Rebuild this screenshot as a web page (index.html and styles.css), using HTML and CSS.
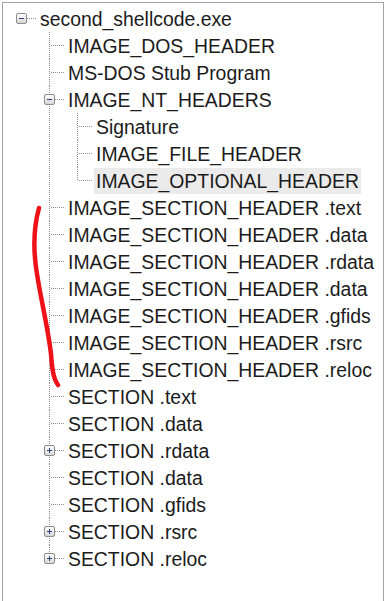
FILE: index.html
```html
<!DOCTYPE html>
<html lang="en">
<head>
  <meta charset="UTF-8">
  <meta name="viewport" content="width=device-width, initial-scale=1.0">
  <title>second_shellcode.exe</title>
  <link rel="stylesheet" href="styles.css">
</head>
<body>
  <div class="tree">
    <ul>
      <li class="root">
        <div class="row"><span class="box open"></span><span class="label">second_shellcode.exe</span></div>
        <ul>
          <li><div class="row"><span class="label">IMAGE_DOS_HEADER</span></div></li>
          <li><div class="row"><span class="label">MS-DOS Stub Program</span></div></li>
          <li>
            <div class="row"><span class="box open"></span><span class="label">IMAGE_NT_HEADERS</span></div>
            <ul>
              <li><div class="row"><span class="label">Signature</span></div></li>
              <li><div class="row"><span class="label">IMAGE_FILE_HEADER</span></div></li>
              <li><div class="row sel"><span class="label">IMAGE_OPTIONAL_HEADER</span></div></li>
            </ul>
          </li>
          <li><div class="row"><span class="label">IMAGE_SECTION_HEADER .text</span></div></li>
          <li><div class="row"><span class="label">IMAGE_SECTION_HEADER .data</span></div></li>
          <li><div class="row"><span class="label">IMAGE_SECTION_HEADER .rdata</span></div></li>
          <li><div class="row"><span class="label">IMAGE_SECTION_HEADER .data</span></div></li>
          <li><div class="row"><span class="label">IMAGE_SECTION_HEADER .gfids</span></div></li>
          <li><div class="row"><span class="label">IMAGE_SECTION_HEADER .rsrc</span></div></li>
          <li><div class="row"><span class="label">IMAGE_SECTION_HEADER .reloc</span></div></li>
          <li><div class="row"><span class="label">SECTION .text</span></div></li>
          <li><div class="row"><span class="label">SECTION .data</span></div></li>
          <li><div class="row"><span class="box closed"></span><span class="label">SECTION .rdata</span></div></li>
          <li><div class="row"><span class="label">SECTION .data</span></div></li>
          <li><div class="row"><span class="label">SECTION .gfids</span></div></li>
          <li><div class="row"><span class="box closed"></span><span class="label">SECTION .rsrc</span></div></li>
          <li><div class="row"><span class="box closed"></span><span class="label">SECTION .reloc</span></div></li>
        </ul>
      </li>
    </ul>
  </div>

  <!-- hand drawn red mark over the section headers -->
  <svg class="mark" width="385" height="601" viewBox="0 0 385 601">
    <path d="M39 208 C34 226 33 250 37 274 C41 300 48 328 51 354 C52 368 53 378 58 385" fill="none" stroke="#ee1118" stroke-width="4.5" stroke-linecap="round"/>
  </svg>
</body>
</html>
```

FILE: styles.css
```css
body {
  margin: 0;
  background-color: #fff;
  overflow: hidden;
}
.tree {
  margin: 2px 0 0 2px;
  width: 380px;
  height: 600px;
  border: 1px solid #a3a3a3;
  border-bottom: none;
  padding-top: 2px;
  font-family: "Liberation Sans", Arial, sans-serif;
  font-size: 19.4px;
  color: #1b1b1b;
}
ul {
  list-style: none;
  margin: 0;
  padding: 0;
}
ul ul {
  margin-left: 28px;
}
li {
  position: relative;
}
.root {
  margin-left: 7px;
}
/* vertical dotted line between siblings */
li li::before {
  content: "";
  position: absolute;
  left: 11px;
  top: 0;
  bottom: 0;
  width: 1px;
  background: repeating-linear-gradient(to bottom, #8e8e8e 0 1px, transparent 1px 2px);
}
li li:last-child::before {
  bottom: auto;
  height: 14px;
}
.row {
  position: relative;
  height: 27px;
  display: flex;
  align-items: center;
  padding-left: 30px;
}
/* horizontal connector */
.row::before {
  content: "";
  position: absolute;
  left: 13px;
  width: 14px;
  top: 13px;
  height: 1px;
  background: repeating-linear-gradient(to right, #8e8e8e 0 1px, transparent 1px 2px);
}
.label {
  white-space: nowrap;
  line-height: 26px;
  padding: 0 2px;
  margin-left: -2px;
}
.row.sel .label {
  background-color: #ebebeb;
}
.box {
  position: absolute;
  left: 6px;
  top: 8px;
  width: 9px;
  height: 9px;
  border: 1px solid #8c8c8c;
  border-radius: 2px;
  background: linear-gradient(#ffffff, #d6d6d6);
  z-index: 1;
}
.box::before {
  content: "";
  position: absolute;
  left: 2px;
  top: 4px;
  width: 5px;
  height: 1px;
  background-color: #2e3f7a;
}
.box.closed::after {
  content: "";
  position: absolute;
  left: 4px;
  top: 2px;
  width: 1px;
  height: 5px;
  background-color: #2e3f7a;
}
.mark {
  position: absolute;
  left: 0;
  top: 0;
  pointer-events: none;
}
```
